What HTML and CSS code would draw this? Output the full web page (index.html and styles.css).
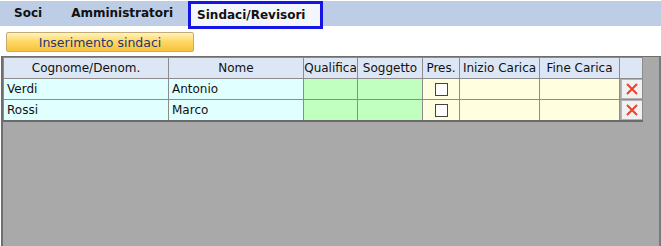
FILE: index.html
```html
<!DOCTYPE html>
<html>
  <head>
    <title>Sindaci/Revisori</title>
    <link rel="stylesheet" href="styles.css">
  </head>
  <body>
    <!-- tab bar -->
    <div class="tabs">
      <span class="tab tab-soci">Soci</span>
      <span class="tab tab-admin">Amministratori</span>
      <span class="tab tab-active">Sindaci/Revisori</span>
    </div>

    <!-- toolbar -->
    <div class="toolbar">
      <button class="btn-insert">Inserimento sindaci</button>
    </div>

    <!-- grid panel -->
    <div class="panel">
      <table class="grid">
        <colgroup>
          <col class="c-cognome">
          <col class="c-nome">
          <col class="c-qual">
          <col class="c-sogg">
          <col class="c-pres">
          <col class="c-inizio">
          <col class="c-fine">
          <col class="c-del">
        </colgroup>
        <thead>
          <tr>
            <th>Cognome/Denom.</th>
            <th>Nome</th>
            <th>Qualifica</th>
            <th>Soggetto</th>
            <th>Pres.</th>
            <th>Inizio Carica</th>
            <th>Fine Carica</th>
            <th></th>
          </tr>
        </thead>
        <tbody>
          <tr>
            <td class="cyan">Verdi</td>
            <td class="cyan">Antonio</td>
            <td class="green"></td>
            <td class="green"></td>
            <td class="yellow center"><span class="check"></span></td>
            <td class="yellow"></td>
            <td class="yellow"></td>
            <td class="del">
              <span class="btn-del">
                <svg width="14" height="14" viewBox="0 0 14 14"><path d="M2 2 L12 12 M12 2 L2 12" stroke="#e8432c" stroke-width="2" fill="none"/></svg>
              </span>
            </td>
          </tr>
          <tr>
            <td class="cyan">Rossi</td>
            <td class="cyan">Marco</td>
            <td class="green"></td>
            <td class="green"></td>
            <td class="yellow center"><span class="check"></span></td>
            <td class="yellow"></td>
            <td class="yellow"></td>
            <td class="del">
              <span class="btn-del">
                <svg width="14" height="14" viewBox="0 0 14 14"><path d="M2 2 L12 12 M12 2 L2 12" stroke="#e8432c" stroke-width="2" fill="none"/></svg>
              </span>
            </td>
          </tr>
        </tbody>
      </table>
    </div>
  </body>
</html>
```

FILE: styles.css
```css
/* page */
body {
  margin: 0;
  font-family: "DejaVu Sans", Verdana, sans-serif;
  font-size: 12px;
  color: #111;
  background-color: #fff;
}

/* tabs */
.tabs {
  display: flex;
  align-items: flex-start;
  height: 25px;
  margin-top: 1px;
  background-color: #bccde5;
}

.tab {
  font-weight: bold;
  font-size: 12px;
  line-height: 25px;
  color: #111;
}

.tab-soci {
  margin-left: 14px;
}

.tab-admin {
  margin-left: 29px;
}

.tab-active {
  margin-left: 15px;
  height: 22px;
  line-height: 22px;
  padding: 0 15px 0 6px;
  border: 3px solid #1414e6;
  background-color: #f3f6fb;
}

/* toolbar */
.toolbar {
  padding: 6px 0 0 6px;
  height: 24px;
}

.btn-insert {
  width: 188px;
  height: 20px;
  padding: 0;
  font-family: "DejaVu Sans", Verdana, sans-serif;
  font-size: 12.5px;
  color: #25357a;
  border: 1px solid #c3ab74;
  border-radius: 2px;
  background: linear-gradient(#fff3c2, #ffd966 45%, #f6c23c);
}

/* panel with grid */
.panel {
  margin-left: 1px;
  height: 200px;
  border-top: 1px solid #6e6e6e;
  border-left: 2px solid #6e6e6e;
  border-right: 2px solid #7a7a7a;
  background-color: #a9a9a9;
}

.grid {
  border-collapse: collapse;
  table-layout: fixed;
  width: 639px;
  border-bottom: 2px solid #6a6a6a;
}

.c-cognome { width: 165px; }
.c-nome { width: 135px; }
.c-qual { width: 54px; }
.c-sogg { width: 65px; }
.c-pres { width: 37px; }
.c-inizio { width: 80px; }
.c-fine { width: 80px; }
.c-del { width: 23px; }

.grid th,
.grid td {
  height: 20px;
  padding: 0 3px;
  border: 1px solid #8c8c8c;
  white-space: nowrap;
  overflow: hidden;
}

.grid th {
  padding: 0;
  font-weight: normal;
  text-align: center;
  background-color: #dce6f4;
  color: #111;
}

.grid td {
  text-align: left;
}

.cyan {
  background-color: #e0ffff;
}

.green {
  background-color: #c1ffc1;
}

.yellow {
  background-color: #ffffe0;
}

.grid td.center {
  text-align: center;
}

.check {
  display: inline-block;
  vertical-align: middle;
  width: 11px;
  height: 11px;
  border: 1px solid #444;
  background-color: #fff;
}

.grid td.del {
  padding: 0;
  background-color: #a9a9a9;
}

.btn-del {
  display: flex;
  align-items: center;
  justify-content: center;
  width: 20px;
  height: 18px;
  margin-left: 1px;
  border: 1px solid #b4b4b4;
  background-color: #f1f1f1;
}
```
